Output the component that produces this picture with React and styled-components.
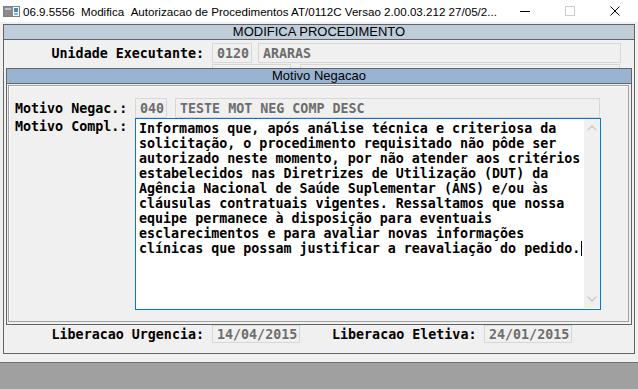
import React from "react";
import styled, { createGlobalStyle } from "styled-components";

const Global = createGlobalStyle`
  html, body { margin: 0; padding: 0; background: #f0f0f0; }
  body { font-family: "Liberation Sans", Arial, sans-serif; }
  * { box-sizing: border-box; }
`;

const MONO = `"DejaVu Sans Mono", "Liberation Mono", monospace`;

const Window = styled.div`
  width: 638px;
  height: 389px;
  display: flex;
  flex-direction: column;
  overflow: hidden;
  background: #f0f0f0;
`;

const TitleBar = styled.div`
  height: 22px;
  flex: none;
  background: #ffffff;
  display: flex;
  align-items: center;
  padding-left: 3px;
`;

const TitleText = styled.span`
  margin-left: 3px;
  font: 11.6px "Liberation Sans", Arial, sans-serif;
  color: #000;
  white-space: nowrap;
  flex: 1;
  min-width: 0;
`;

const Controls = styled.div`
  display: flex;
  height: 22px;
  margin-right: 1px;
`;

const CtrlButton = styled.div`
  width: ${(p) => p.$w}px;
  height: 22px;
  display: flex;
  align-items: center;
  justify-content: center;
`;

const Client = styled.div`
  flex: 1;
  display: flex;
  padding: 2px 3px 8px 3px;
`;

const Frame = styled.section`
  position: relative;
  flex: 1;
  border: 1px solid #646464;
  display: flex;
  flex-direction: column;
`;

const Caption = styled.div`
  height: 15px;
  flex: none;
  background: ${(p) => p.$bg};
  border-bottom: 1px solid #646464;
  text-align: center;
  font: 13px/14px "Liberation Sans", Arial, sans-serif;
  color: #000;
`;

const Row = styled.div`
  display: flex;
  align-items: ${(p) => (p.$top ? "flex-start" : "center")};
  margin-top: ${(p) => p.$mt || 0}px;
  margin-bottom: ${(p) => p.$mb || 0}px;
`;

const Label = styled.span`
  width: ${(p) => p.$w}px;
  flex: none;
  text-align: ${(p) => (p.$left ? "left" : "right")};
  margin-right: 8px;
  padding-top: ${(p) => p.$pt || 0}px;
  font: bold 13.33px/15px ${MONO};
  color: #000;
  white-space: pre;
`;

const Field = styled.div`
  width: ${(p) => p.$w}px;
  height: ${(p) => p.$h || 20}px;
  flex: none;
  margin-right: ${(p) => p.$mr || 0}px;
  border: 1px solid #d7d7d7;
  background: #f0f0f0;
  display: flex;
  align-items: center;
  padding-left: 4px;
  font: bold 13.33px/15px ${MONO};
  color: #6d6d6d;
  white-space: pre;
  overflow: hidden;
`;

const Spacer = styled.div`
  flex: 1;
`;

const Overlay = styled.div`
  position: absolute;
  left: 2px;
  top: 43px;
  width: 626px;
  height: 257px;
  border: 1px solid #646464;
  background: #f0f0f0;
  display: flex;
  flex-direction: column;
`;

const OverlayBody = styled.div`
  flex: 1;
  padding: 1px 2px 2px 1px;
  display: flex;
`;

const InnerBox = styled.div`
  flex: 1;
  border: 1px solid #a0a0a0;
  box-shadow: inset 1px 1px 0 #ffffff;
  padding: 12px 0 0 6px;
  display: flex;
  flex-direction: column;
`;

const Memo = styled.div`
  width: 466px;
  height: 192px;
  border: 1px solid #0078d7;
  background: #fff;
  display: flex;
`;

const MemoText = styled.div`
  flex: 1;
  padding: 2px 0 0 3px;
  font: bold 13.33px/15px ${MONO};
  color: #000;
  white-space: pre;
`;

const Caret = styled.span`
  display: inline-block;
  width: 1px;
  height: 15px;
  background: #000;
  vertical-align: top;
  margin-left: 1px;
`;

const ScrollBar = styled.div`
  width: 16px;
  flex: none;
  margin: 0 0 1px 0;
  background: #f0f0f0;
  display: flex;
  flex-direction: column;
  justify-content: space-between;
  align-items: center;
  padding: 6px 0 6px;
`;

const Footer = styled.div`
  height: 27px;
  flex: none;
  background: #a0a0a0;
  border-top: 1px solid #6e6e6e;
`;

const Chevron = ({ up }) => (
  <svg width="10" height="6" viewBox="0 0 10 6">
    <polyline
      points={up ? "1,5 5,1 9,5" : "1,1 5,5 9,1"}
      fill="none"
      stroke="#c8c8c8"
      strokeWidth="1.3"
    />
  </svg>
);

const AppIcon = () => (
  <svg width="17" height="11" viewBox="0 0 17 11">
    <rect x="0.5" y="0.5" width="16" height="10" fill="#fff" stroke="#808080" />
    <rect x="1" y="1" width="9" height="9" fill="#8a8a8a" />
    <rect x="2" y="2" width="6" height="2" fill="#c0c0c0" />
    <rect x="11" y="2" width="4" height="4" fill="#3a8fc0" />
    <rect x="11" y="7" width="4" height="2" fill="#7fb8d8" />
  </svg>
);

const memo =
  "Informamos que, após análise técnica e criteriosa da\n" +
  "solicitação, o procedimento requisitado não pôde ser\n" +
  "autorizado neste momento, por não atender aos critérios\n" +
  "estabelecidos nas Diretrizes de Utilização (DUT) da\n" +
  "Agência Nacional de Saúde Suplementar (ANS) e/ou às\n" +
  "cláusulas contratuais vigentes. Ressaltamos que nossa\n" +
  "equipe permanece à disposição para eventuais\n" +
  "esclarecimentos e para avaliar novas informações\n" +
  "clínicas que possam justificar a reavaliação do pedido.";

export default function App() {
  return (
    <>
      <Global />
      <Window>
        <TitleBar>
          <AppIcon />
          <TitleText>
            06.9.5556&nbsp;&nbsp;Modifica&nbsp;&nbsp;Autorizacao de Procedimentos AT/0112C Versao 2.00.03.212 27/05/2...
          </TitleText>
          <Controls>
            <CtrlButton $w={45}>
              <svg width="10" height="10" viewBox="0 0 10 10">
                <line x1="0" y1="5.5" x2="10" y2="5.5" stroke="#000" strokeWidth="1" />
              </svg>
            </CtrlButton>
            <CtrlButton $w={45}>
              <svg width="10" height="10" viewBox="0 0 10 10">
                <rect x="0.5" y="0.5" width="9" height="9" fill="none" stroke="#cccccc" />
              </svg>
            </CtrlButton>
            <CtrlButton $w={45}>
              <svg width="10" height="10" viewBox="0 0 10 10">
                <path d="M0.5 0.5 L9.5 9.5 M9.5 0.5 L0.5 9.5" stroke="#000" strokeWidth="1" />
              </svg>
            </CtrlButton>
          </Controls>
        </TitleBar>

        <Client>
          <Frame>
            <Caption $bg="#bfcddb">MODIFICA PROCEDIMENTO</Caption>
            <Row $mt={3}>
              <Label $w={200}>Unidade Executante:</Label>
              <Field $w={40} $mr={6}>0120</Field>
              <Field $w={363}>ARARAS</Field>
            </Row>
            <Row $mt={1}>
              <Label $w={200}>Prestador Executante:</Label>
              <Field $w={79} $mr={9}>0000</Field>
              <Field $w={320}></Field>
            </Row>
            <Spacer />
            <Row $mb={10}>
              <Label $w={200}>Liberacao Urgencia:</Label>
              <Field $w={88} $h={18} $mr={32}>14/04/2015</Field>
              <Label $w={144}>Liberacao Eletiva:</Label>
              <Field $w={88} $h={18}>24/01/2015</Field>
            </Row>

            <Overlay>
              <Caption $bg="#99b4d1">Motivo Negacao</Caption>
              <OverlayBody>
                <InnerBox>
                  <Row>
                    <Label $w={112} $left>Motivo Negac.:</Label>
                    <Field $w={32} $mr={8}>040</Field>
                    <Field $w={425}>TESTE MOT NEG COMP DESC</Field>
                  </Row>
                  <Row $top>
                    <Label $w={112} $left $pt={1}>Motivo Compl.:</Label>
                    <Memo>
                      <MemoText>
                        {memo}
                        <Caret />
                      </MemoText>
                      <ScrollBar>
                        <Chevron up />
                        <Chevron />
                      </ScrollBar>
                    </Memo>
                  </Row>
                </InnerBox>
              </OverlayBody>
            </Overlay>
          </Frame>
        </Client>
        <Footer />
      </Window>
    </>
  );
}
